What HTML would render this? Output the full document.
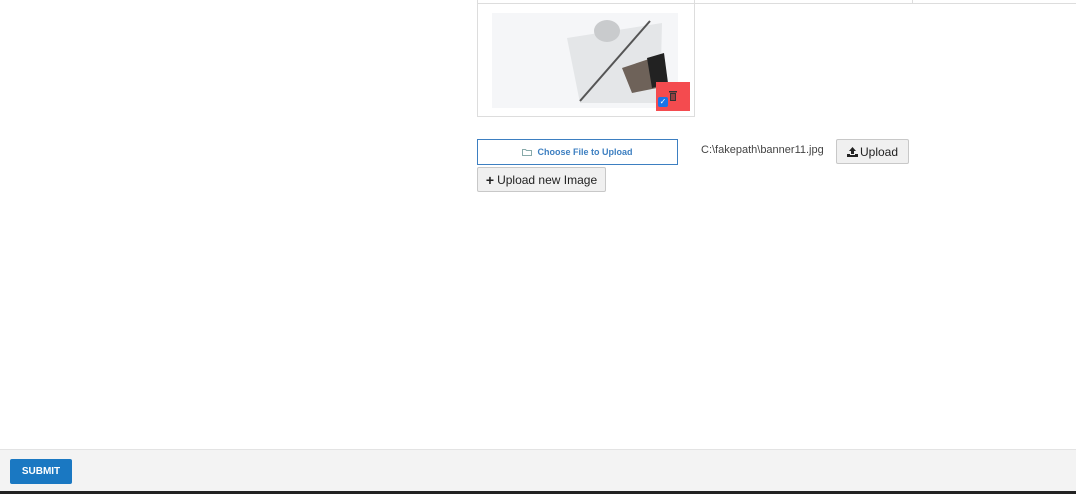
<!DOCTYPE html>
<html><head><style>
body{margin:0;width:1076px;height:494px;position:relative;background:#fff;font-family:"Liberation Sans",sans-serif;overflow:hidden}
.a{position:absolute;box-sizing:border-box}
.btn{background:#f0f0f0;border:1px solid #c8c8c8;border-radius:2px;font-size:12px;color:#222;display:flex;align-items:center;justify-content:center}
</style></head><body>
<div class="a" style="left:477px;top:0;width:599px;height:4px;border-bottom:1px solid #ddd;border-left:1px solid #ddd"></div>
<div class="a" style="left:694px;top:0;width:1px;height:4px;background:#ddd"></div>
<div class="a" style="left:912px;top:0;width:1px;height:4px;background:#ddd"></div>
<div class="a" style="left:477px;top:4px;width:218px;height:113px;border:1px solid #ddd;border-top:none"></div>
<div class="a" style="left:492px;top:13px;width:186px;height:95px;background:#f5f6f8;overflow:hidden">
<svg width="186" height="95">
<polygon points="75,25 170,10 168,90 88,90" fill="#e4e6e8"/>
<ellipse cx="115" cy="18" rx="13" ry="11" fill="#c9cbcd"/>
<line x1="88" y1="88" x2="158" y2="8" stroke="#555" stroke-width="2"/>
<path d="M130 55 L160 45 L165 75 L140 80 Z" fill="#6e6259"/>
<path d="M155 45 L172 40 L176 70 L160 75 Z" fill="#222"/>
</svg></div>
<div class="a" style="left:656px;top:82px;width:34px;height:29px;background:#f44b4f"></div>
<div class="a" style="left:658px;top:97px;width:10px;height:10px;background:#1a73e8;border-radius:2px;color:#fff;font-size:8px;line-height:10px;text-align:center">✓</div>
<svg class="a" style="left:669px;top:91px" width="8" height="10"><rect x="0" y="0" width="8" height="1.5" fill="#333"/><rect x="1" y="2" width="6" height="8" fill="#333"/><rect x="2.5" y="3" width="1" height="6" fill="#f44b4f"/><rect x="4.5" y="3" width="1" height="6" fill="#f44b4f"/></svg>
<div class="a" style="left:477px;top:139px;width:201px;height:26px;border:1px solid #3d7fc1;color:#3d7fc1;font-size:9px;font-weight:bold;display:flex;align-items:center;justify-content:center">
<svg width="10" height="8" style="margin-right:5px"><path d="M0.5 1.5h3l1 1h5v5h-9z" fill="none" stroke="#8aa" stroke-width="1"/></svg>Choose File to Upload</div>
<div class="a" style="left:701px;top:144px;font-size:11px;color:#444">C:\fakepath\banner11.jpg</div>
<div class="a btn" style="left:836px;top:139px;width:73px;height:25px">
<svg width="11" height="10" style="margin-right:2px"><path d="M5.5 0L9 4H7v3H4V4H2z M0 7h3v1h5V7h3v3H0z" fill="#222"/></svg>Upload</div>
<div class="a btn" style="left:477px;top:167px;width:129px;height:25px"><b style="font-size:14px;margin-right:3px">+</b>Upload new Image</div>
<div class="a" style="left:0;top:449px;width:1076px;height:42px;background:#f3f3f3;border-top:1px solid #e3e3e3"></div>
<div class="a" style="left:10px;top:459px;width:62px;height:25px;background:#1a78c2;border-radius:2px;color:#fff;font-size:10px;font-weight:bold;display:flex;align-items:center;justify-content:center">SUBMIT</div>
<div class="a" style="left:0;top:491px;width:1076px;height:3px;background:#222"></div>
</body></html>
